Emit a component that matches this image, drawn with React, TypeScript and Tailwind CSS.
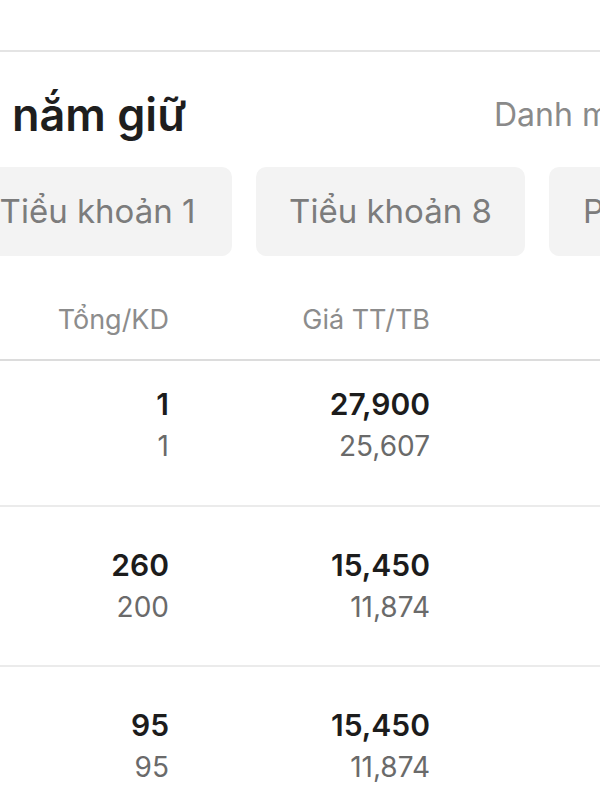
import React from "react";

const rows = [
  { a: "1", b: "1", c: "27,900", d: "25,607", pt: "pt-[26px]", pb: "pb-[42px]" },
  { a: "260", b: "200", c: "15,450", d: "11,874", pt: "pt-[41px]", pb: "pb-[41px]" },
  { a: "95", b: "95", c: "15,450", d: "11,874", pt: "pt-[41px]", pb: "pb-[41px]" },
];

export default function App() {
  return (
    <div
      className="w-[600px] h-[800px] overflow-hidden bg-white"
      style={{ fontFamily: "Inter, 'Noto Sans', sans-serif" }}
    >
      <div className="h-[50px]" />
      <div className="h-[2px] bg-[#e4e4e4]" />
      <div className="flex items-center justify-between pt-[37px] whitespace-nowrap">
        <div className="pl-[12px] text-[45px] leading-[52px] font-semibold text-[#1e1e1e]">nắm giữ</div>
        <div className="w-[106px] overflow-hidden text-[32px] leading-[52px] text-[#8a8a8a]">Danh mục</div>
      </div>
      <div className="mt-[26px] flex gap-[24px] ml-[-37px] whitespace-nowrap">
        <div className="w-[269px] h-[89px] shrink-0 rounded-[10px] bg-[#f3f3f3] flex items-center justify-center text-[33px] text-[#7c7c7c]">
          Tiểu khoản 1
        </div>
        <div className="w-[269px] h-[89px] shrink-0 rounded-[10px] bg-[#f3f3f3] flex items-center justify-center text-[33px] text-[#7c7c7c]">
          Tiểu khoản 8
        </div>
        <div className="w-[269px] h-[89px] shrink-0 rounded-[10px] bg-[#f3f3f3] flex items-center pl-[34px] text-[33px] text-[#7c7c7c]">
          Phái sinh
        </div>
      </div>
      <div className="flex h-[105px] pt-[48px] border-b-2 border-[#dcdcdc] text-[27px] leading-[31px] text-[#8c8c8c]">
        <div className="w-[169px] text-right">Tổng/KD</div>
        <div className="w-[261px] text-right">Giá TT/TB</div>
      </div>
      {rows.map((r, i) => (
        <div key={i} className={`flex border-b-2 border-[#ebebeb] ${r.pt} ${r.pb}`}>
          <div className="w-[169px] text-right leading-[34px]">
            <div className="text-[30px] font-semibold text-[#1c1c1c]">{r.a}</div>
            <div className="mt-[8px] text-[28px] text-[#6a6a6a]">{r.b}</div>
          </div>
          <div className="w-[261px] text-right leading-[34px]">
            <div className="text-[30px] font-semibold text-[#1c1c1c]">{r.c}</div>
            <div className="mt-[8px] text-[28px] text-[#6a6a6a]">{r.d}</div>
          </div>
        </div>
      ))}
    </div>
  );
}
